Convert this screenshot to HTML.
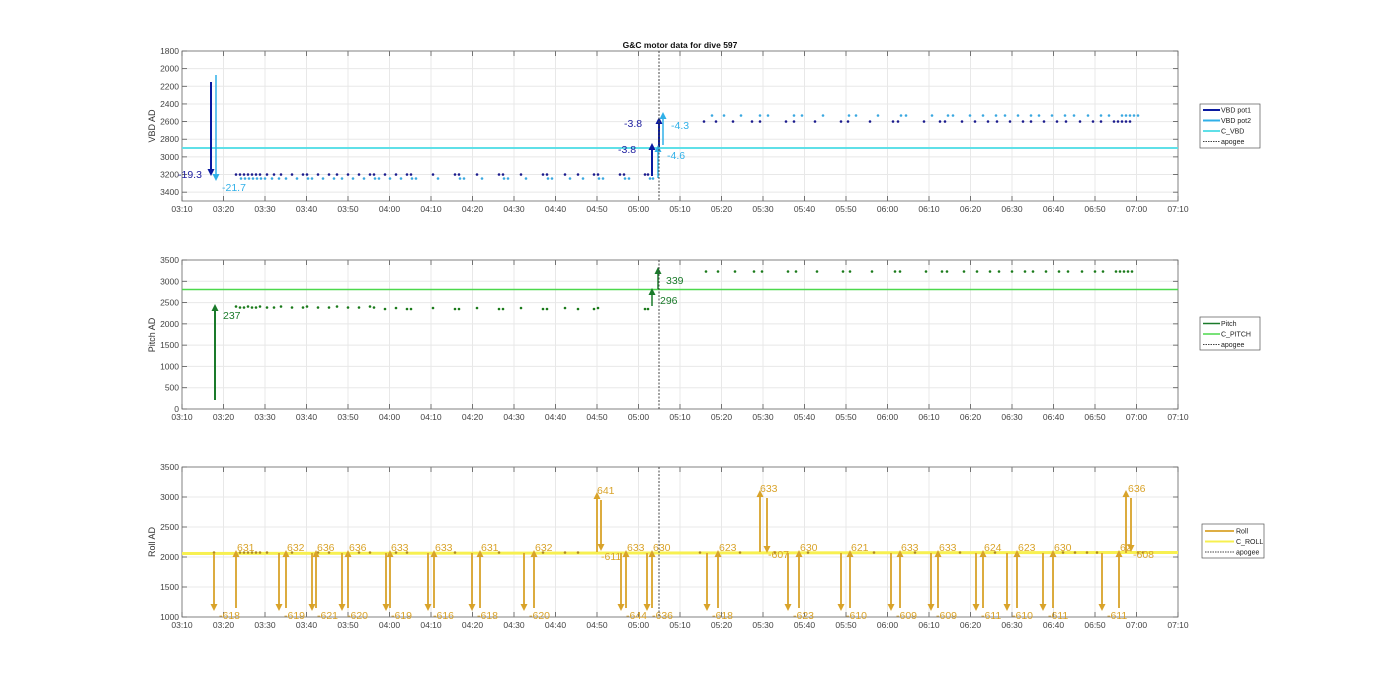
<!DOCTYPE html>
<html><head><meta charset="utf-8"><style>
html,body{margin:0;padding:0;background:#fff;}
svg{display:block;font-family:"Liberation Sans",sans-serif;}
</style></head><body>
<svg id="s" width="1400" height="693" xmlns="http://www.w3.org/2000/svg"></svg>
<script>
var s=document.getElementById('s');var h='';
function L(x1,y1,x2,y2,c,w,d){h+='<line x1="'+x1+'" y1="'+y1+'" x2="'+x2+'" y2="'+y2+'" stroke="'+c+'" stroke-width="'+(w||1)+'"'+(d?' stroke-dasharray="'+d+'"':'')+'/>';}
function T(x,y,t,c,sz,a,extra){h+='<text x="'+x+'" y="'+y+'" fill="'+c+'" font-size="'+sz+'"'+(a?' text-anchor="'+a+'"':'')+(extra||'')+'>'+t+'</text>';}
function D(x,y,c){h+='<circle cx="'+x+'" cy="'+y+'" r="1.3" fill="'+c+'"/>';}
function A(x,y1,y2,c,w){var dir=y2<y1?-1:1;L(x,y1,x,y2-dir*6,c,w||2);h+='<polygon points="'+(x-3.5)+','+(y2-dir*7)+' '+(x+3.5)+','+(y2-dir*7)+' '+x+','+y2+'" fill="'+c+'"/>';}
var X0=182,X1=1178;function tx(m){return X0+m*(X1-X0)/240;}
var ticks=['03:10','03:20','03:30','03:40','03:50','04:00','04:10','04:20','04:30','04:40','04:50','05:00','05:10','05:20','05:30','05:40','05:50','06:00','06:10','06:20','06:30','06:40','06:50','07:00','07:10'];
function axes(top,bot,ylabs,ylab,ylabY){
 h+='<rect x="'+X0+'" y="'+top+'" width="'+(X1-X0)+'" height="'+(bot-top)+'" fill="#fff"/>';
 for(var i=0;i<25;i++){var x=tx(i*10);L(x,top,x,bot,'#e8e8e8',1);T(x,bot+11,ticks[i],'#444',8.5,'middle');L(x,bot,x,bot-5,'#555',0.8);L(x,top,x,top+5,'#555',0.8);}
 for(var j=0;j<ylabs.length;j++){var y=ylabs[j][0];L(X0,y,X1,y,'#e8e8e8',1);T(X0-3,y+3,ylabs[j][1],'#444',8.5,'end');L(X0,y,X0+5,y,'#555',0.8);L(X1,y,X1-5,y,'#555',0.8);}
 h+='<rect x="'+X0+'" y="'+top+'" width="'+(X1-X0)+'" height="'+(bot-top)+'" fill="none" stroke="#666" stroke-width="0.8"/>';
 T(155,ylabY,ylab,'#333',9,'middle',' transform="rotate(-90 155 '+ylabY+')"');
}
var y1=function(v){return 51+(v-1800)*150/1700;};
var yl=[];for(var v=1800;v<=3400;v+=200)yl.push([y1(v),v]);
axes(51,201,yl,'VBD AD',126);
L(X0,148,X1,148,'#5fe0e8',2);
var dA=[236,240,244,248,252,256,260,267,274,281,292,303,307,318,329,337,348,359,370,374,385,396,407,411,433,455,459,477,499,503,521,543,547,565,578,594,598,620,624,645,648];
var dB=[704,716,733,752,760,786,794,815,841,848,870,893,898,924,940,945,962,975,988,997,1010,1023,1031,1044,1057,1066,1080,1093,1101,1114,1118,1122,1126,1130];
dA.forEach(function(x){D(x,174.5,'#1a1a8c');D(x+5,178.5,'#3aa8e0');});
dB.forEach(function(x){D(x,121.5,'#1a1a8c');D(x+8,115.5,'#3aa8e0');});
A(211,82,176,'#0a1aa0',2);A(216,75,181,'#30b0e8',1.5);
T(178,178,'-19.3','#2020a0',10.5);T(222,191,'-21.7','#30b0e8',10.5);
A(652,176,143,'#0a1aa0',2);A(659,147,117,'#0a1aa0',2);
A(658,178,145,'#30b0e8',1.5);A(663,145,112,'#30b0e8',1.5);
T(618,153,'-3.8','#2020a0',10.5);T(624,127,'-3.8','#2020a0',10.5);
T(667,159,'-4.6','#30b0e8',10.5);T(671,129,'-4.3','#30b0e8',10.5);
L(659,51,659,201,'#444',1,'2,1.5');
T(680,48,'G&amp;C motor data for dive 597','#111',8.5,'middle',' font-weight="bold"');
h+='<rect x="1200" y="104" width="60" height="44" fill="#fff" stroke="#555" stroke-width="0.7"/>';
[['VBD pot1','#0a1aa0',2,0],['VBD pot2','#30b0e8',2,0],['C_VBD','#5fe0e8',2,0],['apogee','#444',1,1]].forEach(function(e,i){var y=110+i*10.5;L(1203,y,1220,y,e[1],e[2],e[3]?'1.5,1':null);T(1221,y+2.5,e[0],'#222',7);});
var y2=function(v){return 260+(3500-v)*149/3500;};
yl=[];for(v=0;v<=3500;v+=500)yl.push([y2(v),v]);
axes(260,409,yl,'Pitch AD',335);
L(X0,289.5,X1,289.5,'#4cd84c',1.5);
[236,240,244,248,252,256,260,267,274,281,292,303,307,318,329,337,348,359,370,374,385,396,407,411,433,455,459,477,499,503,521,543,547,565,578,594,598,645,648].forEach(function(x,i){D(x,307+((i%3)?0.5:-0.5)+(x>380?1.5:0),'#1a7a1a');});
dB.forEach(function(x){D(x+2,271.5,'#1a7a1a');});
A(215,400,304,'#1a7a2a',2);A(652,306,288,'#1a7a2a',1.5);A(658,289,267,'#1a7a2a',1.5);
T(223,319,'237','#1a7a2a',10.5);T(660,304,'296','#1a7a2a',10.5);T(666,284,'339','#1a7a2a',10.5);
L(659,260,659,409,'#444',1,'2,1.5');
h+='<rect x="1200" y="317" width="60" height="33" fill="#fff" stroke="#555" stroke-width="0.7"/>';
[['Pitch','#1a7a2a',1.5,0],['C_PITCH','#4cd84c',1.5,0],['apogee','#444',1,1]].forEach(function(e,i){var y=323.5+i*10.5;L(1203,y,1220,y,e[1],e[2],e[3]?'1.5,1':null);T(1221,y+2.5,e[0],'#222',7);});
var y3=function(v){return 467+(3500-v)*150/2500;};
yl=[];for(v=1000;v<=3500;v+=500)yl.push([y3(v),v]);
axes(467,617,yl,'Roll AD',542);
L(X0,553.5,X1,552.5,'#f7f050',3);
[214,240,244,248,252,256,260,267,292,318,329,359,370,396,407,455,499,543,565,578,700,740,775,808,874,915,960,995,1063,1075,1087,1097,1138,1143].forEach(function(x){D(x,552.5,'#b08a20');});
var R='#d9a32a';
var pairs=[[214,236,'631','-618'],[279,286,'632','-619'],[312,316,'636','-621'],[342,348,'636','-620'],[386,390,'633','-619'],[428,434,'633','-616'],[472,480,'631','-618'],[524,534,'632','-620'],[621,626,'633','-644'],[647,652,'630','-636'],[707,718,'623','-618'],[788,799,'630','-623'],[841,850,'621','-610'],[891,900,'633','-609'],[931,938,'633','-609'],[976,983,'624','-611'],[1007,1017,'623','-610'],[1043,1053,'630','-611'],[1102,1119,'62','-611']];
pairs.forEach(function(p){A(p[0],553,611,R,1.8);A(p[1],608,550,R,1.8);T(p[1]+1,551,p[2],R,10.5);T(p[0]+5,619,p[3],R,10.5);});
A(597,552,492,R,1.8);A(601,500,551,R,1.8);T(597,494,'641',R,10.5);T(601,560,'-611',R,10.5);
A(760,552,490,R,1.8);A(767,498,553,R,1.8);T(760,492,'633',R,10.5);T(768,558,'-607',R,10.5);
A(1126,553,490,R,1.8);A(1131,498,552,R,1.8);T(1128,492,'636',R,10.5);T(1133,558,'-608',R,10.5);
L(659,467,659,617,'#444',1,'2,1.5');
h+='<rect x="1202" y="524" width="62" height="34" fill="#fff" stroke="#555" stroke-width="0.7"/>';
[['Roll',R,1.8,0],['C_ROLL','#f7f050',2,0],['apogee','#444',1,1]].forEach(function(e,i){var y=531+i*10.5;L(1205,y,1234,y,e[1],e[2],e[3]?'1.5,1':null);T(1236,y+2.5,e[0],'#222',7);});
s.innerHTML=h;
</script>
</body></html>
